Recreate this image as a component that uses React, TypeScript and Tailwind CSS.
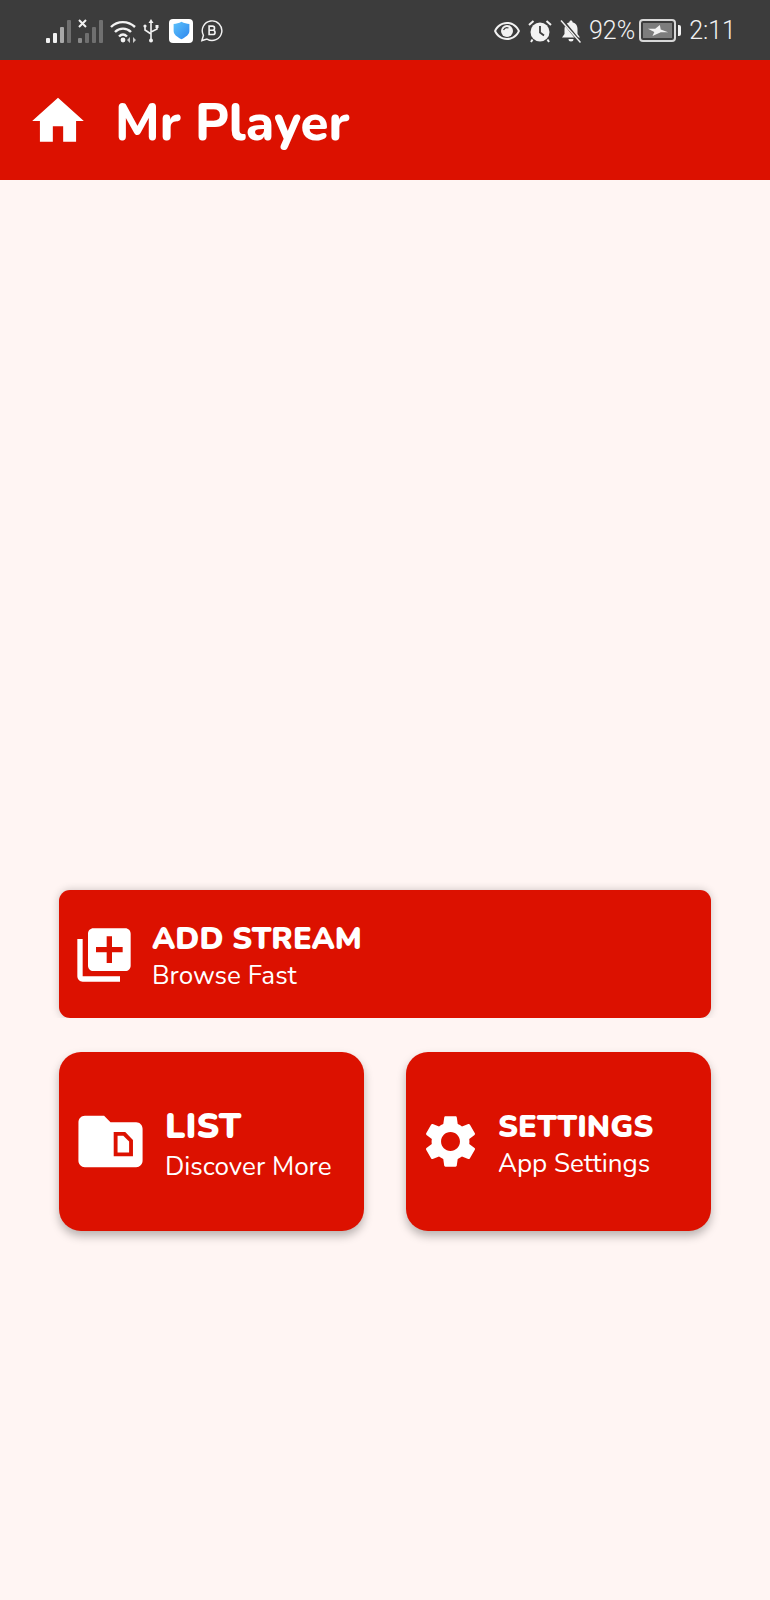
const FONT = "font-['Nunito','Lato','Noto_Sans',sans-serif]";

const HomeIcon = () => (
    <svg viewBox="0 0 24 24" className="w-[62px] h-[62px] mt-[2px] fill-white">
        <path d="M10 20v-6h4v6h5v-8h3L12 3 2 12h3v8z"/>
    </svg>
);

const AddIcon = () => (
    <svg viewBox="0 0 24 24" className="w-[64px] h-[64px] mt-[1px] fill-white">
        <path d="M4 6H2v14c0 1.1.9 2 2 2h14v-2H4V6zm16-4H8c-1.1 0-2 .9-2 2v12c0 1.1.9 2 2 2h12c1.100 0 2-.9 2-2V4c0-1.100-.9-2-2-2zm-1 9h-4v4h-2v-4H9V9h4V5h2v4h4v2z"/>
    </svg>
);

const FolderIcon = () => (
    <svg viewBox="0 0 24 24" className="w-[77px] h-[77px]">
        <path fill="#fff" d="M20 6h-8l-2-2H4c-1.1 0-1.99.9-1.99 2L2 18c0 1.1.9 2 2 2h16c1.1 0 2-.9 2-2V8c0-1.1-.9-2-2-2z"/>
        <path fill="#dc1100" d="M13 9h3.6l2.4 2.5v5.1h-6z"/>
        <path fill="#fff" d="M14.2 10.2h1.8l1.8 1.8v3.4h-3.6z"/>
    </svg>
);

const GearIcon = () => (
    <svg viewBox="0 0 24 24" className="w-[63px] h-[63px] fill-white">
        <path d="M19.14 12.94c.04-.3.06-.61.06-.94 0-.32-.02-.64-.07-.94l2.03-1.58c.18-.14.23-.41.12-.61l-1.92-3.32c-.12-.22-.37-.29-.59-.22l-2.39.96c-.5-.38-1.03-.7-1.62-.94l-.36-2.54c-.04-.24-.24-.41-.48-.41h-3.84c-.24 0-.43.17-.47.41l-.36 2.54c-.59.24-1.13.57-1.62.94l-2.39-.96c-.22-.08-.47 0-.59.22L2.74 8.87c-.12.21-.08.47.12.61l2.03 1.58c-.05.3-.09.63-.09.94s.02.64.07.94l-2.03 1.58c-.18.14-.23.41-.12.61l1.92 3.32c.12.22.37.29.59.22l2.39-.96c.5.38 1.03.7 1.62.94l.36 2.54c.05.24.24.41.48.41h3.84c.24 0 .44-.17.47-.41l.36-2.54c.59-.24 1.13-.56 1.62-.94l2.39.96c.22.08.47 0 .59-.22l1.92-3.32c.12-.22.07-.47-.12-.61l-2.01-1.58zM12 15.6c-1.98 0-3.6-1.62-3.6-3.6s1.62-3.6 3.6-3.6 3.6 1.62 3.6 3.6-1.62 3.6-3.6 3.6z"/>
    </svg>
);

const Signal = ({cross}: {cross?: boolean}) => (
    <svg viewBox="0 0 25 24" className="w-[25px] h-[24px]">
        <rect x="0" y="19" width="4" height="5" rx="1" fill={cross ? "#8a8a8a" : "#f2f2f2"}/>
        <rect x="7" y="14" width="4" height="10" rx="1" fill={cross ? "#6f6f6f" : "#f2f2f2"}/>
        <rect x="14" y="8" width="4" height="16" rx="1" fill={cross ? "#6f6f6f" : "#a8a8a8"}/>
        <rect x="21" y="1" width="4" height="23" rx="1" fill="#707070"/>
        {cross && <path d="M1 1l7 7M8 1L1 8" stroke="#f2f2f2" strokeWidth="2"/>}
    </svg>
);

const Wifi = () => (
    <svg viewBox="0 0 28 24" className="w-[28px] h-[24px]" fill="none" stroke="#f2f2f2" strokeWidth="2.4">
        <path d="M1 8c6.500-6.500 17-6.500 24 0"/>
        <path d="M5 13c4.500-4.500 11.500-4.500 16 0"/>
        <path d="M9 17.500c2.500-2.500 5.500-2.500 8 0"/>
        <circle cx="13" cy="21" r="2.400" fill="#f2f2f2" stroke="none"/>
        <path d="M20 18v6l-3-3zM23 18v6l3-3z" fill="#c8c8c8" stroke="none"/>
    </svg>
);

const Usb = () => (
    <svg viewBox="0 0 16 24" className="w-[16px] h-[24px]" fill="none" stroke="#f2f2f2" strokeWidth="1.6">
        <path d="M8 3v18M2 8v3l6 4M14 8v2l-6 3"/>
        <path d="M8 0l2.500 4h-5z" fill="#f2f2f2" stroke="none"/>
        <circle cx="8" cy="21.500" r="2" fill="#f2f2f2" stroke="none"/>
        <circle cx="2" cy="7" r="1.600" fill="#f2f2f2" stroke="none"/>
        <rect x="12.500" y="6" width="3" height="3" fill="#f2f2f2" stroke="none"/>
    </svg>
);

const ShieldTile = () => (
    <div className="w-[24px] h-[24px] rounded-[4px] bg-white flex items-center justify-center">
        <svg viewBox="0 0 24 24" className="w-[21px] h-[21px]">
            <defs>
                <linearGradient id="shield" x1="0" y1="0" x2="1" y2="1">
                    <stop offset="0" stopColor="#5cc2fb"/>
                    <stop offset="1" stopColor="#2e86ee"/>
                </linearGradient>
            </defs>
            <path fill="url(#shield)" d="M12 2c3 1.600 6 2.400 9 2.600v8c0 4-4 7-9 9.400-5-2.400-9-5.400-9-9.400v-8c3-.2 6-1 9-2.600z"/>
        </svg>
    </div>
);

const BusinessBubble = () => (
    <svg viewBox="0 0 24 24" className="w-[23px] h-[23px]" fill="none" stroke="#f2f2f2" strokeWidth="1.500">
        <path d="M2 22.500l1.600-5.500a10.200 10.200 0 1 1 3.700 3.900z"/>
        <path d="M9.500 7.500h3.500a2 2 0 0 1 0 4.300H9.500h4a2.100 2.100 0 0 1 0 4.400h-4z" strokeWidth="1.700"/>
    </svg>
);

const Eye = () => (
    <svg viewBox="0 0 28 20" className="w-[28px] h-[20px]">
        <path fillRule="evenodd" fill="#f2f2f2" d="M14 1C8 1 3.200 4.600 1 10c2.200 5.400 7 9 13 9s10.800-3.600 13-9C24.800 4.600 20 1 14 1zm0 16c-4.800 0-8.800-2.800-10.800-7 2-4.200 6-7 10.800-7s8.800 2.800 10.800 7c-2 4.200-6 7-10.800 7z"/>
        <circle cx="14" cy="10" r="6" fill="#f2f2f2"/>
        <path d="M10.500 9c1-2 3-2.800 5-2" stroke="#3c3c3c" strokeWidth="1.200" fill="none"/>
    </svg>
);

const Alarm = () => (
    <svg viewBox="0 0 24 24" className="w-[24px] h-[24px]">
        <circle cx="12" cy="13" r="9.500" fill="#f2f2f2"/>
        <path d="M12 7v6.500l4 3" stroke="#3c3c3c" strokeWidth="1.800" fill="none"/>
        <path d="M1 6l4.500-4M23 6l-4.500-4M4.500 20.500L3 23M19.500 20.500L21 23" stroke="#f2f2f2" strokeWidth="2" fill="none"/>
    </svg>
);

const BellOff = () => (
    <svg viewBox="0 0 24 24" className="w-[24px] h-[24px]">
        <path fill="#f2f2f2" d="M12 1.500c-1 0-1.600.7-1.600 1.700C7 4 5.500 6.700 5.500 10v5L3 18.500h18L18.500 15v-5c0-3.300-1.500-6-5-6.800 0-1-.5-1.700-1.500-1.700zM9.500 20a2.500 2.500 0 0 0 5 0z"/>
        <path d="M3 1l18 22" stroke="#3c3c3c" strokeWidth="3"/>
        <path d="M2 1.500l19.500 22" stroke="#f2f2f2" strokeWidth="1.400"/>
    </svg>
);

const Battery = () => (
    <div className="flex items-center gap-[2px]">
        <div className="w-[37px] h-[23px] border-2 border-[#d8d8d8] rounded-[4px] p-[2px]">
            <div className="w-full h-full bg-[#7d7d7d] flex items-center justify-center">
                <svg viewBox="0 0 24 12" className="w-[22px] h-[11px] fill-[#f2f2f2]">
                    <path d="M14 0L9 4H1l7 3.500L6 12l9-4h8l-8-3z"/>
                </svg>
            </div>
        </div>
        <div className="w-[3px] h-[11px] bg-[#f2f2f2] rounded-r-[2px]"/>
    </div>
);

const StatusBar = () => (
    <div className="h-[60px] bg-[#3c3c3c] flex items-center justify-between pl-[46px] pr-[34px] pt-[1px] font-['Roboto',sans-serif] font-light text-[25px] text-[#f2f2f2]">
        <div className="flex items-center gap-[7px]">
            <Signal/>
            <Signal cross/>
            <Wifi/>
            <div className="-ml-[2px]"><Usb/></div>
            <div className="ml-[3px]"><ShieldTile/></div>
            <BusinessBubble/>
        </div>
        <div className="flex items-center">
            <div className="flex items-center gap-[7px] mr-[6px]">
                <Eye/>
                <Alarm/>
                <BellOff/>
            </div>
            <span>92%</span>
            <div className="ml-[4px] mr-[8px]"><Battery/></div>
            <span>2:11</span>
        </div>
    </div>
);

const BigCard = () => (
    <div className="overflow-hidden pt-[10px] px-[10px] -mt-[10px] -mx-[10px]">
        <div className="h-[128px] bg-[#dc1100] rounded-[11px] shadow-[0_0_8px_rgba(0,0,0,0.2)] flex items-center pl-[13px] gap-[16px]">
            <AddIcon/>
            <div className="text-white pt-[6px]">
                <div className="text-[30.6px] leading-[34px] font-black">ADD STREAM</div>
                <div className="text-[26px] leading-[32px] mt-[4px]">Browse Fast</div>
            </div>
        </div>
    </div>
);

const SmallCard = ({icon, title, subtitle, gap, titleSize, textBox}: {
    icon: React.ReactNode;
    title: string;
    subtitle: string;
    gap: string;
    titleSize: string;
    textBox: string;
}) => (
    <div className={`h-[179px] bg-[#dc1100] rounded-[22px] shadow-[0_5px_10px_rgba(0,0,0,0.28)] flex items-center pl-[13px] ${gap}`}>
        {icon}
        <div className={`text-white ${textBox}`}>
            <div className={`${titleSize} leading-[36px] font-black`}>{title}</div>
            <div className="text-[26px] leading-[32px] whitespace-nowrap">{subtitle}</div>
        </div>
    </div>
);

const App = () => {
    return (
        <div className={`${FONT} w-[770px] h-[1600px] bg-[#fff5f3] flex flex-col`}>
            <StatusBar/>
            <div className="h-[120px] bg-[#dc1100] flex items-center pl-[27px] gap-[26px] text-white">
                <HomeIcon/>
                <h1 className="text-[51px] font-extrabold leading-none mt-[6px]">Mr Player</h1>
            </div>
            <div className="pt-[710px] px-[59px] flex flex-col gap-[34px]">
                <BigCard/>
                <div className="grid grid-cols-2 gap-[42px]">
                    <SmallCard icon={<FolderIcon/>} title="LIST" subtitle="Discover More" gap="gap-[16px]"
                               titleSize="text-[35px]" textBox="pt-[8px] flex flex-col gap-[6px]"/>
                    <SmallCard icon={<GearIcon/>} title="SETTINGS" subtitle="App Settings" gap="gap-[16px]"
                               titleSize="text-[30.8px]" textBox="pt-[5px] flex flex-col gap-[3px]"/>
                </div>
            </div>
        </div>
    )
}

export default App;
